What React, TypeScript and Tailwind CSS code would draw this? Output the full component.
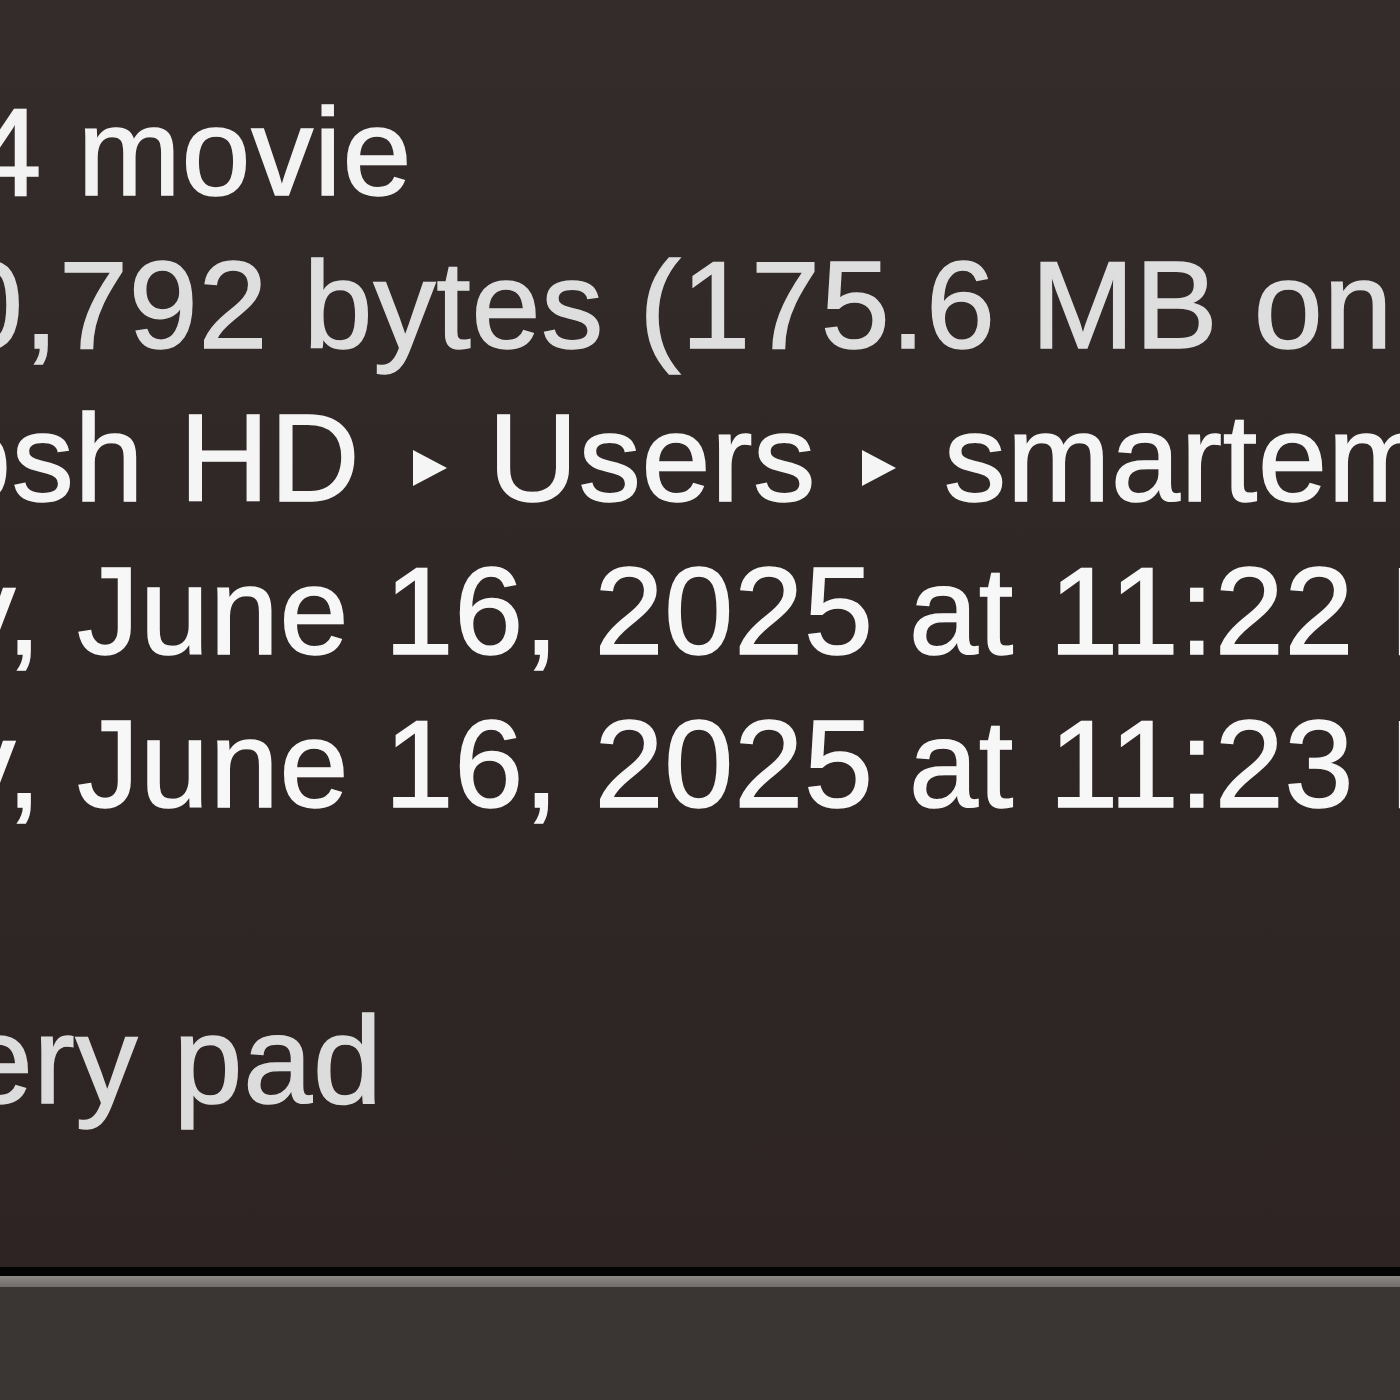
import type { ReactNode } from 'react'

const Arrow = ({ className }: { className: string }) => (
  <svg
    viewBox="0 0 36 38"
    className={`inline-block h-[38px] w-[36px] align-[14px] ${className}`}
    fill="#f5f5f5"
  >
    <path d="M1 1 L35 19 L1 37 Z" />
  </svg>
)

function Row({ label, children, className = '' }: { label: string; children: ReactNode; className?: string }) {
  return (
    <div className="flex h-[153px] items-center whitespace-nowrap leading-[153px]">
      <span className="w-[600px] shrink-0 pr-[24px] text-right text-[#bdbdbd]">{label}</span>
      <span className={className}>{children}</span>
    </div>
  )
}

export default function App() {
  return (
    <div
      className="relative h-[1400px] w-[1400px] overflow-hidden bg-[#3a3633] text-[124px] tracking-[0.8px] [-webkit-text-stroke:1.5px_currentColor]"
      style={{ fontFamily: '"Liberation Sans", Arial, Helvetica, sans-serif' }}
    >
      {/* info panel */}
      <div className="h-[1267px] overflow-hidden bg-gradient-to-b from-[#342b2b] via-[#2f2626] to-[#2e2424]">
        <div className="ml-[-1030px] pt-[76px]">
          <Row label="Kind:" className="-ml-[8px] text-[#f3f3f3]">MPEG-4 movie</Row>
          <Row label="Size:" className="text-[#dedede]">175,560,792 bytes (175.6 MB on disk)</Row>
          <Row label="Where:" className="pl-[2px] text-[#f5f5f5]">
            Macintosh HD
            <Arrow className="ml-[52px] mr-[40px]" />
            Users
            <Arrow className="ml-[45px] mr-[47px]" />
            smartemail
          </Row>
          <Row label="Created:" className="text-[#f7f7f7]">Monday, June 16, 2025 at 11:22 PM</Row>
          <Row label="Modified:" className="text-[#f7f7f7]">Monday, June 16, 2025 at 11:23 PM</Row>
          <div className="mt-[143px] flex h-[153px] items-center whitespace-nowrap leading-[153px]">
            <span className="w-[602px] shrink-0" />
            <span className="text-[#dcdcdc]">Stationery pad</span>
          </div>
        </div>
      </div>
      {/* window edge */}
      <div className="h-[9px] bg-[#050404]" />
      <div className="h-[11px] bg-gradient-to-b from-[#8c8986] to-[#6f6c69]" />
      <div className="h-[113px] bg-[#3a3633]" />
    </div>
  )
}
